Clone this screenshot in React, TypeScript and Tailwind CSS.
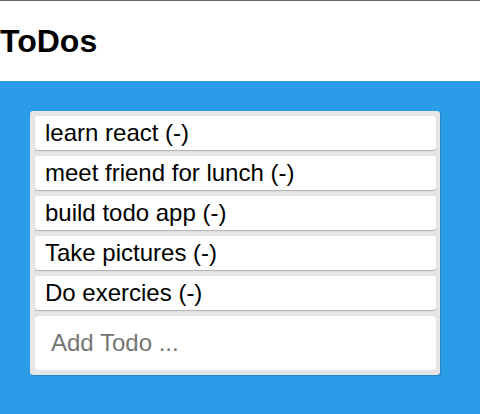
import React from "react";

const todos = [
  "learn react",
  "meet friend for lunch",
  "build todo app",
  "Take pictures",
  "Do exercies",
];

export default function App() {
  return (
    <div className="min-h-[414px] flex flex-col border-t border-[#666] bg-white text-black [font-family:'Liberation_Sans',Arial,sans-serif]">
      <h1 className="text-[32px] font-bold leading-[37px] mt-[22px] mb-[21px]">ToDos</h1>
      <div className="flex-1 bg-[#2b9ce8] pt-[30px] pl-[30px] pb-[40px]">
        <div className="w-[410px] bg-[#e6e6e6] rounded-[3px] pl-[5px] pr-[4px] py-[5px] flex flex-col gap-[6px] shadow-[1px_1px_1px_rgba(0,0,0,0.15)]">
          {todos.map((t) => (
            <div
              key={t}
              className="bg-white rounded-[3px] h-[34px] px-[10px] pt-[3px] text-[24px] leading-[28px] shadow-[0_1px_1px_rgba(0,0,0,0.25)]"
            >
              {t} (-)
            </div>
          ))}
          <input
            className="bg-white rounded-[4px] h-[54px] px-[16px] text-[24px] outline-none placeholder:text-[#757575]"
            placeholder="Add Todo ..."
          />
        </div>
      </div>
    </div>
  );
}
